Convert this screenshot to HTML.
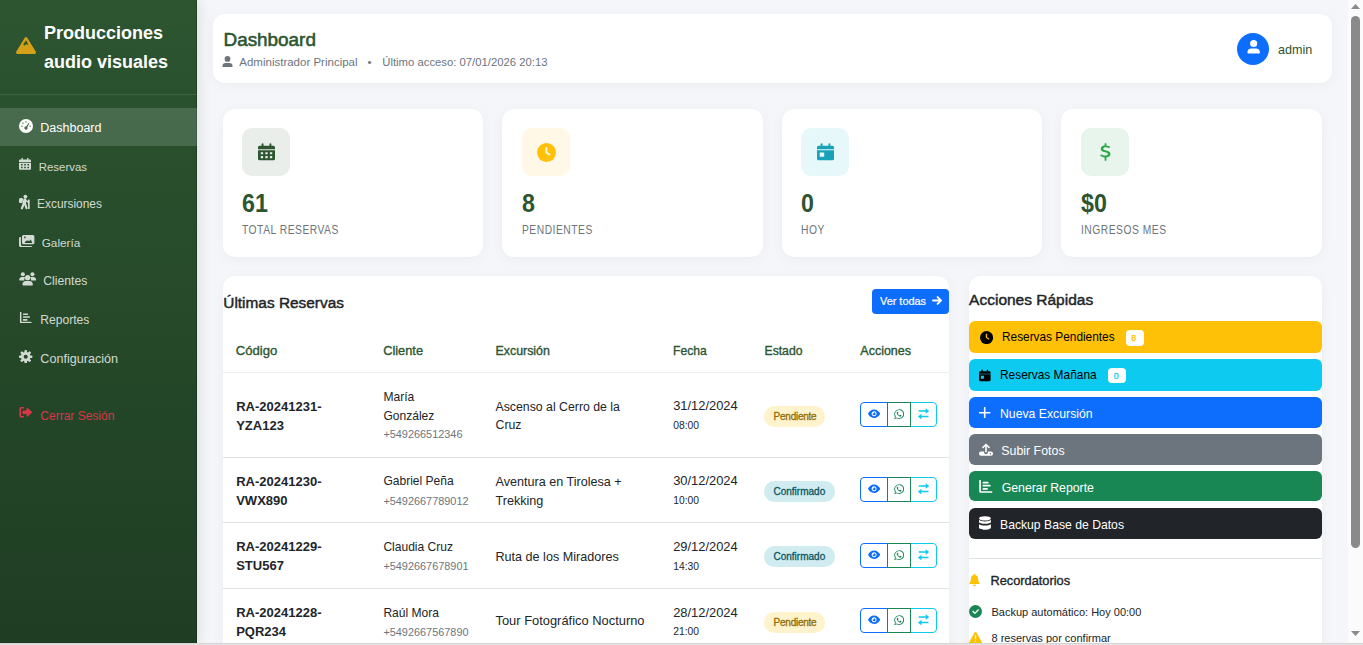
<!DOCTYPE html><html><head><meta charset="utf-8"><title>Dashboard</title><style>
html,body{margin:0;padding:0;width:1363px;height:645px;overflow:hidden;background:#f4f6f9;font-family:"Liberation Sans",sans-serif;}
.t{position:absolute;white-space:nowrap;line-height:1;}
svg{display:block;}
.card{position:absolute;background:#fff;border-radius:12px;box-shadow:0 2px 12px rgba(0,0,0,0.045);}

</style></head><body>
<div style="position:absolute;left:0px;top:0px;width:197px;height:645px;background:linear-gradient(180deg,#2c5530 0%,#1f3d23 100%);box-shadow:3px 0 12px rgba(0,0,0,0.09);"></div>
<div style="position:absolute;left:196px;top:0px;width:1px;height:645px;background:rgba(0,0,0,0.2);"></div>
<svg style="position:absolute;left:16px;top:37px;" width="20" height="17" viewBox="0 0 20 17" fill="#d4a017"><path d="M10 0c.5 0 .9.3 1.2.7l8.5 13.9c.6 1-.1 2.4-1.2 2.4H1.5C.4 17-.3 15.6.3 14.6L8.8.7C9.1.3 9.5 0 10 0z"/><path d="M10 3.2L7.2 7.8l1.3.9 1.5-1.8 1.2 1.2 1-.8-.6-1z" fill="#2c5530"/></svg>
<div class="t" style="left:44.00px;top:24.00px;font-size:18px;color:#fff;font-weight:bold;">Producciones</div>
<div class="t" style="left:44.00px;top:53.00px;font-size:18px;color:#fff;font-weight:bold;">audio visuales</div>
<div style="position:absolute;left:0px;top:94px;width:197px;height:1px;background:rgba(255,255,255,0.1);"></div>
<div style="position:absolute;left:0px;top:108px;width:197px;height:38px;background:rgba(255,255,255,0.15);"></div>
<svg style="position:absolute;left:19px;top:119px;" width="14" height="14" viewBox="0 0 16 16" fill="#fff"><circle cx="8" cy="8" r="8"/><g fill="#496a4d"><circle cx="8" cy="3.3" r=".8"/><circle cx="4.5" cy="4.9" r=".8"/><circle cx="3.3" cy="8.2" r=".8"/><circle cx="12.7" cy="8.2" r=".8"/><circle cx="8" cy="10.3" r="1.9"/><path d="M10.9 4.6l.9.5-3 5.6-1.5-.8z"/></g></svg>
<svg style="position:absolute;left:19px;top:157px;" width="12" height="13.6" viewBox="0 0 16 16" fill="#fff" opacity="0.8"><path d="M3.4 .8a.9.9 0 0 1 1.8 0V3H3.4zM10.8 .8a.9.9 0 0 1 1.8 0V3h-1.8z"/><path d="M0 3.8a1.5 1.5 0 0 1 1.5-1.5h13A1.5 1.5 0 0 1 16 3.8V5.6H0z"/><path fill-rule="evenodd" d="M0 6.5h16v8a1.5 1.5 0 0 1-1.5 1.5h-13A1.5 1.5 0 0 1 0 14.5z M2.6 8.4v2h2.2v-2z M6.9 8.4v2h2.2v-2z M11.2 8.4v2h2.2v-2z M2.6 12v2h2.2v-2z M6.9 12v2h2.2v-2z M11.2 12v2h2.2v-2z"/></svg>
<svg style="position:absolute;left:17px;top:193px;" width="16" height="18" viewBox="0 0 16 18" fill="#fff" opacity="0.8"><circle cx="8.4" cy="3.6" r="1.9"/><rect x="2" y="5" width="3.9" height="5" rx="1.3" transform="rotate(8 4 7.5)"/><g stroke="#fff" stroke-linecap="round" fill="none"><path d="M7.9 6.8L7.2 10.6" stroke-width="3.2"/><path d="M6.6 11L4.9 15.3" stroke-width="2.2"/><path d="M8.2 11L9.5 15.3" stroke-width="2.2"/><path d="M8.8 7.6L11.2 9" stroke-width="1.6"/></g><rect x="11" y="6.4" width="1.7" height="9.6" rx=".6"/></svg>
<svg style="position:absolute;left:19px;top:235px;" width="16" height="12" viewBox="0 0 16 12" fill="#fff" opacity="0.8"><path fill-rule="evenodd" d="M4.5 0h9.4a1.5 1.5 0 0 1 1.5 1.5v6.3a1.5 1.5 0 0 1-1.5 1.5H4.5A1.5 1.5 0 0 1 3 7.8V1.5A1.5 1.5 0 0 1 4.5 0z M5.6 7.9c.4-1.4 1.6-2.4 3.1-2.4.6 0 1.2.2 1.7.5l1.3-1.6 1.7 3.5z M5.9 1.6a.8.8 0 1 0 .001 0z"/><path d="M0 3.5A1.4 1.4 0 0 1 1.4 2.1H1.9v7.5c0 .8.6 1.4 1.4 1.4h9.8v.1c0 .5-.4.9-.9.9H1.4A1.4 1.4 0 0 1 0 10.6z"/></svg>
<svg style="position:absolute;left:18.7px;top:272.2px;" width="17.3" height="13.9" viewBox="0 0 18 14" fill="#fff" opacity="0.8"><circle cx="4" cy="2.2" r="2.1"/><circle cx="14" cy="2.2" r="2.1"/><path d="M0.2 7.9c0-1.6 1.3-2.9 2.9-2.9h1.8c.6 0 1.1.2 1.5.4a3.9 3.9 0 0 0-.9 3.1H.8a.6.6 0 0 1-.6-.6z"/><path d="M17.8 7.9c0-1.6-1.3-2.9-2.9-2.9h-1.8c-.6 0-1.1.2-1.5.4a3.9 3.9 0 0 1 .9 3.1h4.7a.6.6 0 0 0 .6-.6z"/><circle cx="9" cy="5.7" r="2.7"/><path d="M7 9.2h4c1.9 0 3.4 1.5 3.4 3.4v.5a.8.8 0 0 1-.8.8H4.4a.8.8 0 0 1-.8-.8v-.5c0-1.9 1.5-3.4 3.4-3.4z"/></svg>
<svg style="position:absolute;left:19.2px;top:311.5px;" width="13.4" height="11.5" viewBox="0 0 14 14" fill="#fff" opacity="0.8"><path d="M0 .6a.9.9 0 0 1 1.8 0V12h11.5a.9.9 0 0 1 0 1.8H1.2A1.2 1.2 0 0 1 0 12.6z"/><rect x="3.6" y="1.8" width="6.4" height="1.9" rx=".6"/><rect x="3.6" y="5.2" width="8.6" height="1.9" rx=".6"/><rect x="3.6" y="8.6" width="5.6" height="1.9" rx=".6"/></svg>
<svg style="position:absolute;left:19.2px;top:349.7px;" width="13.4" height="13.4" viewBox="0 0 16 16" fill="#fff" opacity="0.8"><path fill-rule="evenodd" d="M8 2.3a5.7 5.7 0 1 1-.001 0z M8 5.6a2.4 2.4 0 1 0 .001 0z"/><rect x="6.5" y="0" width="3" height="4" rx=".8" transform="rotate(0 8 8)"/><rect x="6.5" y="0" width="3" height="4" rx=".8" transform="rotate(45 8 8)"/><rect x="6.5" y="0" width="3" height="4" rx=".8" transform="rotate(90 8 8)"/><rect x="6.5" y="0" width="3" height="4" rx=".8" transform="rotate(135 8 8)"/><rect x="6.5" y="0" width="3" height="4" rx=".8" transform="rotate(180 8 8)"/><rect x="6.5" y="0" width="3" height="4" rx=".8" transform="rotate(225 8 8)"/><rect x="6.5" y="0" width="3" height="4" rx=".8" transform="rotate(270 8 8)"/><rect x="6.5" y="0" width="3" height="4" rx=".8" transform="rotate(315 8 8)"/></svg>
<svg style="position:absolute;left:19.2px;top:406.4px;" width="13.4" height="12.5" viewBox="0 0 14 14" fill="#dc3545"><path d="M5 1H2.2A2.2 2.2 0 0 0 0 3.2v7.6A2.2 2.2 0 0 0 2.2 13H5v-1.8H2.4a.6.6 0 0 1-.6-.6V3.4c0-.3.3-.6.6-.6H5z"/><path d="M9.2 2.2l4.6 4.2a.8.8 0 0 1 0 1.2l-4.6 4.2a.7.7 0 0 1-1.2-.5V9H4.5a1 1 0 0 1-1-1V6a1 1 0 0 1 1-1H8V2.7a.7.7 0 0 1 1.2-.5z"/></svg>
<div class="t" style="left:40.30px;top:122.00px;font-size:12.5px;color:#fff;font-weight:normal;">Dashboard</div>
<div class="t" style="left:38.80px;top:162.00px;font-size:11.4px;color:rgba(255,255,255,0.8);font-weight:normal;">Reservas</div>
<div class="t" style="left:37.10px;top:199.00px;font-size:11.9px;color:rgba(255,255,255,0.8);font-weight:normal;">Excursiones</div>
<div class="t" style="left:41.70px;top:238.00px;font-size:11.8px;color:rgba(255,255,255,0.8);font-weight:normal;">Galería</div>
<div class="t" style="left:43.30px;top:275.00px;font-size:12.2px;color:rgba(255,255,255,0.8);font-weight:normal;">Clientes</div>
<div class="t" style="left:40.30px;top:314.00px;font-size:12.1px;color:rgba(255,255,255,0.8);font-weight:normal;">Reportes</div>
<div class="t" style="left:40.30px;top:353.00px;font-size:12.6px;color:rgba(255,255,255,0.8);font-weight:normal;">Configuración</div>
<div class="t" style="left:40.30px;top:410.00px;font-size:12.0px;color:#dc3545;font-weight:normal;">Cerrar Sesión</div>
<div class="card" style="left:213px;top:14px;width:1119px;height:69px;"></div>
<div class="t" style="left:223.50px;top:31.00px;font-size:18.9px;color:#2c5530;font-weight:normal;-webkit-text-stroke:0.55px currentColor;">Dashboard</div>
<svg style="position:absolute;left:222px;top:55.8px;" width="11" height="11.6" viewBox="0 0 14 16" fill="#6c757d"><circle cx="7" cy="4" r="4"/><path d="M4.6 9.5h4.8A4.6 4.6 0 0 1 14 14.1v.4a.8.8 0 0 1-.8.8H.8a.8.8 0 0 1-.8-.8v-.4A4.6 4.6 0 0 1 4.6 9.5z"/></svg>
<div class="t" style="left:239.30px;top:57.00px;font-size:11.5px;color:#6c757d;font-weight:normal;">Administrador Principal</div>
<div class="t" style="left:367.50px;top:57.00px;font-size:11.5px;color:#6c757d;font-weight:normal;">•</div>
<div class="t" style="left:382.30px;top:57.00px;font-size:11.3px;color:#6c757d;font-weight:normal;">Último acceso: 07/01/2026 20:13</div>
<div style="position:absolute;left:1237px;top:33px;width:32px;height:32px;background:#0d6efd;border-radius:50%;"></div>
<svg style="position:absolute;left:1247.2px;top:40px;" width="13.3" height="14.2" viewBox="0 0 14 16" fill="#fff"><circle cx="7" cy="4" r="4"/><path d="M4.6 9.5h4.8A4.6 4.6 0 0 1 14 14.1v.4a.8.8 0 0 1-.8.8H.8a.8.8 0 0 1-.8-.8v-.4A4.6 4.6 0 0 1 4.6 9.5z"/></svg>
<div class="t" style="left:1278.00px;top:44.00px;font-size:12.6px;color:#2c5530;font-weight:normal;">admin</div>
<div class="card" style="left:223px;top:109px;width:260.35px;height:148px;"></div>
<div style="position:absolute;left:242.2px;top:128px;width:48px;height:48px;background:#e9eeea;border-radius:10px;"></div>
<div class="t" style="left:242.20px;top:191.00px;font-size:25.8px;color:#2c5530;font-weight:bold;transform:scaleX(0.9);transform-origin:0 0;">61</div>
<div class="t" style="left:242.20px;top:224.00px;font-size:12.1px;color:#6c757d;font-weight:normal;letter-spacing:0.6px;transform:scaleX(0.85);transform-origin:0 0;">TOTAL RESERVAS</div>
<div class="card" style="left:502.35px;top:109px;width:260.35px;height:148px;"></div>
<div style="position:absolute;left:521.5500000000001px;top:128px;width:48px;height:48px;background:#fff8e6;border-radius:10px;"></div>
<div class="t" style="left:521.55px;top:191.00px;font-size:25.8px;color:#2c5530;font-weight:bold;transform:scaleX(0.9);transform-origin:0 0;">8</div>
<div class="t" style="left:521.55px;top:224.00px;font-size:12.1px;color:#6c757d;font-weight:normal;letter-spacing:0.6px;transform:scaleX(0.85);transform-origin:0 0;">PENDIENTES</div>
<div class="card" style="left:781.9px;top:109px;width:260.35px;height:148px;"></div>
<div style="position:absolute;left:801.1px;top:128px;width:48px;height:48px;background:#e7f8fb;border-radius:10px;"></div>
<div class="t" style="left:801.10px;top:191.00px;font-size:25.8px;color:#2c5530;font-weight:bold;transform:scaleX(0.9);transform-origin:0 0;">0</div>
<div class="t" style="left:801.10px;top:224.00px;font-size:12.1px;color:#6c757d;font-weight:normal;letter-spacing:0.6px;transform:scaleX(0.85);transform-origin:0 0;">HOY</div>
<div class="card" style="left:1061.45px;top:109px;width:260.35px;height:148px;"></div>
<div style="position:absolute;left:1080.65px;top:128px;width:48px;height:48px;background:#e8f5ec;border-radius:10px;"></div>
<div class="t" style="left:1080.65px;top:191.00px;font-size:25.8px;color:#2c5530;font-weight:bold;transform:scaleX(0.9);transform-origin:0 0;">$0</div>
<div class="t" style="left:1080.65px;top:224.00px;font-size:12.1px;color:#6c757d;font-weight:normal;letter-spacing:0.6px;transform:scaleX(0.85);transform-origin:0 0;">INGRESOS MES</div>
<svg style="position:absolute;left:257.5px;top:141.8px;" width="17" height="19.6" viewBox="0 0 16 16" fill="#2c5530"><path d="M3.4 .8a.9.9 0 0 1 1.8 0V3H3.4zM10.8 .8a.9.9 0 0 1 1.8 0V3h-1.8z"/><path d="M0 3.8a1.5 1.5 0 0 1 1.5-1.5h13A1.5 1.5 0 0 1 16 3.8V5.6H0z"/><path fill-rule="evenodd" d="M0 6.5h16v8a1.5 1.5 0 0 1-1.5 1.5h-13A1.5 1.5 0 0 1 0 14.5z M2.6 8.4v2h2.2v-2z M6.9 8.4v2h2.2v-2z M11.2 8.4v2h2.2v-2z M2.6 12v2h2.2v-2z M6.9 12v2h2.2v-2z M11.2 12v2h2.2v-2z"/></svg>
<svg style="position:absolute;left:536.5px;top:142.5px;" width="19" height="19" viewBox="0 0 16 16" fill="#ffc107"><circle cx="8" cy="8" r="8"/><path d="M7.1 3.5h1.6v4.1l2.8 1.9-.9 1.3-3.5-2.4z" fill="#fff8e6"/></svg>
<svg style="position:absolute;left:817px;top:141.8px;" width="17" height="19.6" viewBox="0 0 16 16" fill="#17a2b8"><path d="M3.4 .8a.9.9 0 0 1 1.8 0V3H3.4zM10.8 .8a.9.9 0 0 1 1.8 0V3h-1.8z"/><path d="M0 3.8a1.5 1.5 0 0 1 1.5-1.5h13A1.5 1.5 0 0 1 16 3.8V5.6H0z"/><path fill-rule="evenodd" d="M0 6.5h16v8a1.5 1.5 0 0 1-1.5 1.5h-13A1.5 1.5 0 0 1 0 14.5z M2.6 8.6v4h4.2v-4z"/></svg>
<svg style="position:absolute;left:1099.5px;top:143px;" width="11" height="18" viewBox="0 0 10 16" fill="#28a745"><path d="M4.2 0h1.6v2c1.3.1 2.5.5 3.4 1.1l-.8 1.5c-.9-.5-2-.9-3.2-.9-1.4 0-2.2.5-2.2 1.3 0 .9.9 1.2 2.6 1.6 2.2.5 3.9 1.2 3.9 3.3 0 1.7-1.4 2.8-3.7 3V16H4.2v-3.1c-1.6-.1-3-.6-4.1-1.4l.8-1.5c1.1.7 2.5 1.2 3.9 1.2 1.5 0 2.4-.5 2.4-1.4 0-.9-.8-1.2-2.7-1.6C2.3 7.7.7 7 .7 5c0-1.6 1.3-2.8 3.5-3z"/></svg>
<div class="card" style="left:223px;top:276px;width:726px;height:400px;"></div>
<div class="t" style="left:223.30px;top:295.00px;font-size:15.4px;color:#212529;font-weight:normal;-webkit-text-stroke:0.45px currentColor;">Últimas Reservas</div>
<div style="position:absolute;left:872px;top:289px;width:77px;height:25px;background:#0d6efd;border-radius:4px;"></div>
<div class="t" style="left:880.00px;top:296.00px;font-size:10.9px;color:#fff;font-weight:normal;-webkit-text-stroke:0.2px currentColor;">Ver todas</div>
<svg style="position:absolute;left:931.8px;top:296.4px;" width="10.3" height="9" viewBox="0 0 10.3 9" fill="#fff"><g fill="none" stroke="#fff" stroke-width="1.9" stroke-linecap="round" stroke-linejoin="round"><path d="M1 4.5h8M5.6 1.1L9 4.5 5.6 7.9"/></g></svg>
<div class="t" style="left:235.80px;top:344.00px;font-size:13.1px;color:#2c5530;font-weight:normal;-webkit-text-stroke:0.35px currentColor;">Código</div>
<div class="t" style="left:383.20px;top:345.00px;font-size:12.8px;color:#2c5530;font-weight:normal;-webkit-text-stroke:0.35px currentColor;">Cliente</div>
<div class="t" style="left:495.50px;top:345.00px;font-size:12.4px;color:#2c5530;font-weight:normal;-webkit-text-stroke:0.35px currentColor;">Excursión</div>
<div class="t" style="left:673.10px;top:345.00px;font-size:12.1px;color:#2c5530;font-weight:normal;-webkit-text-stroke:0.35px currentColor;">Fecha</div>
<div class="t" style="left:764.50px;top:345.00px;font-size:12.2px;color:#2c5530;font-weight:normal;-webkit-text-stroke:0.35px currentColor;">Estado</div>
<div class="t" style="left:860.30px;top:345.00px;font-size:12.5px;color:#2c5530;font-weight:normal;-webkit-text-stroke:0.35px currentColor;">Acciones</div>
<div style="position:absolute;left:223px;top:372px;width:726px;height:1px;background:#eceef0;"></div>
<div style="position:absolute;left:223px;top:457px;width:726px;height:1px;background:#dee2e6;"></div>
<div style="position:absolute;left:223px;top:522px;width:726px;height:1px;background:#dee2e6;"></div>
<div style="position:absolute;left:223px;top:588px;width:726px;height:1px;background:#dee2e6;"></div>
<div class="t" style="left:236.20px;top:400.00px;font-size:13px;color:#212529;font-weight:bold;">RA-20241231-</div>
<div class="t" style="left:236.20px;top:419.00px;font-size:13px;color:#212529;font-weight:bold;">YZA123</div>
<div class="t" style="left:383.40px;top:391.00px;font-size:12.06px;color:#212529;font-weight:normal;">María</div>
<div class="t" style="left:383.40px;top:410.00px;font-size:12.06px;color:#212529;font-weight:normal;">González</div>
<div class="t" style="left:383.40px;top:429.00px;font-size:10.9px;color:#6c757d;font-weight:normal;">+549266512346</div>
<div class="t" style="left:495.50px;top:401.00px;font-size:12.3px;color:#212529;font-weight:normal;">Ascenso al Cerro de la</div>
<div class="t" style="left:495.50px;top:419.00px;font-size:12.3px;color:#212529;font-weight:normal;">Cruz</div>
<div class="t" style="left:673.20px;top:400.00px;font-size:12.9px;color:#212529;font-weight:normal;">31/12/2024</div>
<div class="t" style="left:673.20px;top:421.00px;font-size:10.3px;color:#212529;font-weight:normal;">08:00</div>
<div style="position:absolute;left:764.3px;top:406.2px;width:61.2px;height:20.5px;background:#fff3cd;border-radius:10.25px;"></div>
<div class="t" style="left:773.60px;top:412.00px;font-size:10px;color:#8f6c05;font-weight:normal;-webkit-text-stroke:0.3px currentColor;letter-spacing:-0.25px;">Pendiente</div>
<div style="position:absolute;left:860px;top:402px;width:28px;height:25px;box-sizing:border-box;border:1px solid #0d6efd;border-radius:4px 0 0 4px;"></div>
<div style="position:absolute;left:910px;top:402px;width:27px;height:25px;box-sizing:border-box;border:1px solid #0dcaf0;border-radius:0 4px 4px 0;"></div>
<div style="position:absolute;left:887px;top:402px;width:24px;height:25px;box-sizing:border-box;border:1px solid #198754;"></div>
<svg style="position:absolute;left:867.8px;top:408.9px;" width="12.2" height="9.6" viewBox="0 0 16 11" fill="#0d6efd"><path fill-rule="evenodd" d="M8 0c3.6 0 6.5 2.7 7.8 5a1 1 0 0 1 0 .9C14.5 8.3 11.6 11 8 11S1.5 8.3.2 5.9a1 1 0 0 1 0-.9C1.5 2.7 4.4 0 8 0z M8 2.3a3.2 3.2 0 1 0 .001 0z"/><path d="M8 3.6a1.9 1.9 0 1 1-1.8 1.4 1.2 1.2 0 0 0 1.6-1.3z"/></svg>
<svg style="position:absolute;left:893.9px;top:409.3px;" width="10.4" height="10.4" viewBox="0 0 16 16" fill="#198754"><path fill-rule="evenodd" d="M8 0.2a7.6 7.6 0 0 1 0 15.2c-1.3 0-2.6-.3-3.7-1L.3 15.6l1.2-3.8A7.6 7.6 0 0 1 8 .2z M8 1.5a6.3 6.3 0 0 0-5.3 9.7l.2.3-.7 2.3 2.4-.6.3.2A6.3 6.3 0 1 0 8 1.5z"/><path d="M5.5 4.3c.2 0 .4 0 .5.3l.7 1.6c.1.2 0 .4-.1.5l-.5.6c-.1.1-.1.3 0 .4.5.9 1.2 1.6 2.1 2.1.1.1.3.1.4 0l.6-.7c.1-.1.3-.2.5-.1l1.5.7c.2.1.3.3.3.5 0 .9-.7 1.6-1.6 1.6C7.7 11.8 4.2 8.4 4.2 5.9c0-.9.5-1.6 1.3-1.6z"/></svg>
<svg style="position:absolute;left:918.2px;top:407.9px;" width="11.2" height="11.5" viewBox="0 0 16 16" fill="#0dcaf0"><path d="M11 0l4.6 3.6a.6.6 0 0 1 0 .9L11 8V5.2H1V2.9h10z"/><path d="M5 8v2.8h10v2.3H5V16L.4 12.5a.6.6 0 0 1 0-.9z"/></svg>
<div class="t" style="left:236.20px;top:475.00px;font-size:13px;color:#212529;font-weight:bold;">RA-20241230-</div>
<div class="t" style="left:236.20px;top:494.00px;font-size:13px;color:#212529;font-weight:bold;">VWX890</div>
<div class="t" style="left:383.40px;top:475.00px;font-size:12.06px;color:#212529;font-weight:normal;">Gabriel Peña</div>
<div class="t" style="left:383.40px;top:496.00px;font-size:10.9px;color:#6c757d;font-weight:normal;">+5492667789012</div>
<div class="t" style="left:495.50px;top:476.00px;font-size:12.6px;color:#212529;font-weight:normal;">Aventura en Tirolesa +</div>
<div class="t" style="left:495.50px;top:495.00px;font-size:12.6px;color:#212529;font-weight:normal;">Trekking</div>
<div class="t" style="left:673.20px;top:475.00px;font-size:12.9px;color:#212529;font-weight:normal;">30/12/2024</div>
<div class="t" style="left:673.20px;top:496.00px;font-size:10.3px;color:#212529;font-weight:normal;">10:00</div>
<div style="position:absolute;left:764.2px;top:481px;width:70.8px;height:20.5px;background:#d1ecf1;border-radius:10.25px;"></div>
<div class="t" style="left:773.50px;top:487.00px;font-size:10px;color:#0c5460;font-weight:normal;-webkit-text-stroke:0.3px currentColor;letter-spacing:0px;">Confirmado</div>
<div style="position:absolute;left:860px;top:477px;width:28px;height:25px;box-sizing:border-box;border:1px solid #0d6efd;border-radius:4px 0 0 4px;"></div>
<div style="position:absolute;left:910px;top:477px;width:27px;height:25px;box-sizing:border-box;border:1px solid #0dcaf0;border-radius:0 4px 4px 0;"></div>
<div style="position:absolute;left:887px;top:477px;width:24px;height:25px;box-sizing:border-box;border:1px solid #198754;"></div>
<svg style="position:absolute;left:867.8px;top:483.9px;" width="12.2" height="9.6" viewBox="0 0 16 11" fill="#0d6efd"><path fill-rule="evenodd" d="M8 0c3.6 0 6.5 2.7 7.8 5a1 1 0 0 1 0 .9C14.5 8.3 11.6 11 8 11S1.5 8.3.2 5.9a1 1 0 0 1 0-.9C1.5 2.7 4.4 0 8 0z M8 2.3a3.2 3.2 0 1 0 .001 0z"/><path d="M8 3.6a1.9 1.9 0 1 1-1.8 1.4 1.2 1.2 0 0 0 1.6-1.3z"/></svg>
<svg style="position:absolute;left:893.9px;top:484.3px;" width="10.4" height="10.4" viewBox="0 0 16 16" fill="#198754"><path fill-rule="evenodd" d="M8 0.2a7.6 7.6 0 0 1 0 15.2c-1.3 0-2.6-.3-3.7-1L.3 15.6l1.2-3.8A7.6 7.6 0 0 1 8 .2z M8 1.5a6.3 6.3 0 0 0-5.3 9.7l.2.3-.7 2.3 2.4-.6.3.2A6.3 6.3 0 1 0 8 1.5z"/><path d="M5.5 4.3c.2 0 .4 0 .5.3l.7 1.6c.1.2 0 .4-.1.5l-.5.6c-.1.1-.1.3 0 .4.5.9 1.2 1.6 2.1 2.1.1.1.3.1.4 0l.6-.7c.1-.1.3-.2.5-.1l1.5.7c.2.1.3.3.3.5 0 .9-.7 1.6-1.6 1.6C7.7 11.8 4.2 8.4 4.2 5.9c0-.9.5-1.6 1.3-1.6z"/></svg>
<svg style="position:absolute;left:918.2px;top:482.9px;" width="11.2" height="11.5" viewBox="0 0 16 16" fill="#0dcaf0"><path d="M11 0l4.6 3.6a.6.6 0 0 1 0 .9L11 8V5.2H1V2.9h10z"/><path d="M5 8v2.8h10v2.3H5V16L.4 12.5a.6.6 0 0 1 0-.9z"/></svg>
<div class="t" style="left:236.20px;top:540.00px;font-size:13px;color:#212529;font-weight:bold;">RA-20241229-</div>
<div class="t" style="left:236.20px;top:559.00px;font-size:13px;color:#212529;font-weight:bold;">STU567</div>
<div class="t" style="left:383.40px;top:541.00px;font-size:12.06px;color:#212529;font-weight:normal;">Claudia Cruz</div>
<div class="t" style="left:383.40px;top:561.00px;font-size:10.9px;color:#6c757d;font-weight:normal;">+5492667678901</div>
<div class="t" style="left:495.50px;top:551.00px;font-size:12.6px;color:#212529;font-weight:normal;">Ruta de los Miradores</div>
<div class="t" style="left:673.20px;top:541.00px;font-size:12.9px;color:#212529;font-weight:normal;">29/12/2024</div>
<div class="t" style="left:673.20px;top:562.00px;font-size:10.3px;color:#212529;font-weight:normal;">14:30</div>
<div style="position:absolute;left:764.2px;top:546.2px;width:70.8px;height:20.5px;background:#d1ecf1;border-radius:10.25px;"></div>
<div class="t" style="left:773.50px;top:552.00px;font-size:10px;color:#0c5460;font-weight:normal;-webkit-text-stroke:0.3px currentColor;letter-spacing:0px;">Confirmado</div>
<div style="position:absolute;left:860px;top:543px;width:28px;height:25px;box-sizing:border-box;border:1px solid #0d6efd;border-radius:4px 0 0 4px;"></div>
<div style="position:absolute;left:910px;top:543px;width:27px;height:25px;box-sizing:border-box;border:1px solid #0dcaf0;border-radius:0 4px 4px 0;"></div>
<div style="position:absolute;left:887px;top:543px;width:24px;height:25px;box-sizing:border-box;border:1px solid #198754;"></div>
<svg style="position:absolute;left:867.8px;top:549.9px;" width="12.2" height="9.6" viewBox="0 0 16 11" fill="#0d6efd"><path fill-rule="evenodd" d="M8 0c3.6 0 6.5 2.7 7.8 5a1 1 0 0 1 0 .9C14.5 8.3 11.6 11 8 11S1.5 8.3.2 5.9a1 1 0 0 1 0-.9C1.5 2.7 4.4 0 8 0z M8 2.3a3.2 3.2 0 1 0 .001 0z"/><path d="M8 3.6a1.9 1.9 0 1 1-1.8 1.4 1.2 1.2 0 0 0 1.6-1.3z"/></svg>
<svg style="position:absolute;left:893.9px;top:550.3px;" width="10.4" height="10.4" viewBox="0 0 16 16" fill="#198754"><path fill-rule="evenodd" d="M8 0.2a7.6 7.6 0 0 1 0 15.2c-1.3 0-2.6-.3-3.7-1L.3 15.6l1.2-3.8A7.6 7.6 0 0 1 8 .2z M8 1.5a6.3 6.3 0 0 0-5.3 9.7l.2.3-.7 2.3 2.4-.6.3.2A6.3 6.3 0 1 0 8 1.5z"/><path d="M5.5 4.3c.2 0 .4 0 .5.3l.7 1.6c.1.2 0 .4-.1.5l-.5.6c-.1.1-.1.3 0 .4.5.9 1.2 1.6 2.1 2.1.1.1.3.1.4 0l.6-.7c.1-.1.3-.2.5-.1l1.5.7c.2.1.3.3.3.5 0 .9-.7 1.6-1.6 1.6C7.7 11.8 4.2 8.4 4.2 5.9c0-.9.5-1.6 1.3-1.6z"/></svg>
<svg style="position:absolute;left:918.2px;top:548.9px;" width="11.2" height="11.5" viewBox="0 0 16 16" fill="#0dcaf0"><path d="M11 0l4.6 3.6a.6.6 0 0 1 0 .9L11 8V5.2H1V2.9h10z"/><path d="M5 8v2.8h10v2.3H5V16L.4 12.5a.6.6 0 0 1 0-.9z"/></svg>
<div class="t" style="left:236.20px;top:606.00px;font-size:13px;color:#212529;font-weight:bold;">RA-20241228-</div>
<div class="t" style="left:236.20px;top:625.00px;font-size:13px;color:#212529;font-weight:bold;">PQR234</div>
<div class="t" style="left:383.40px;top:607.00px;font-size:12.06px;color:#212529;font-weight:normal;">Raúl Mora</div>
<div class="t" style="left:383.40px;top:627.00px;font-size:10.9px;color:#6c757d;font-weight:normal;">+5492667567890</div>
<div class="t" style="left:495.50px;top:615.00px;font-size:12.9px;color:#212529;font-weight:normal;">Tour Fotográfico Nocturno</div>
<div class="t" style="left:673.20px;top:607.00px;font-size:12.9px;color:#212529;font-weight:normal;">28/12/2024</div>
<div class="t" style="left:673.20px;top:627.00px;font-size:10.3px;color:#212529;font-weight:normal;">21:00</div>
<div style="position:absolute;left:764.3px;top:612px;width:61.2px;height:20.5px;background:#fff3cd;border-radius:10.25px;"></div>
<div class="t" style="left:773.60px;top:618.00px;font-size:10px;color:#8f6c05;font-weight:normal;-webkit-text-stroke:0.3px currentColor;letter-spacing:-0.25px;">Pendiente</div>
<div style="position:absolute;left:860px;top:608px;width:28px;height:25px;box-sizing:border-box;border:1px solid #0d6efd;border-radius:4px 0 0 4px;"></div>
<div style="position:absolute;left:910px;top:608px;width:27px;height:25px;box-sizing:border-box;border:1px solid #0dcaf0;border-radius:0 4px 4px 0;"></div>
<div style="position:absolute;left:887px;top:608px;width:24px;height:25px;box-sizing:border-box;border:1px solid #198754;"></div>
<svg style="position:absolute;left:867.8px;top:614.9px;" width="12.2" height="9.6" viewBox="0 0 16 11" fill="#0d6efd"><path fill-rule="evenodd" d="M8 0c3.6 0 6.5 2.7 7.8 5a1 1 0 0 1 0 .9C14.5 8.3 11.6 11 8 11S1.5 8.3.2 5.9a1 1 0 0 1 0-.9C1.5 2.7 4.4 0 8 0z M8 2.3a3.2 3.2 0 1 0 .001 0z"/><path d="M8 3.6a1.9 1.9 0 1 1-1.8 1.4 1.2 1.2 0 0 0 1.6-1.3z"/></svg>
<svg style="position:absolute;left:893.9px;top:615.3px;" width="10.4" height="10.4" viewBox="0 0 16 16" fill="#198754"><path fill-rule="evenodd" d="M8 0.2a7.6 7.6 0 0 1 0 15.2c-1.3 0-2.6-.3-3.7-1L.3 15.6l1.2-3.8A7.6 7.6 0 0 1 8 .2z M8 1.5a6.3 6.3 0 0 0-5.3 9.7l.2.3-.7 2.3 2.4-.6.3.2A6.3 6.3 0 1 0 8 1.5z"/><path d="M5.5 4.3c.2 0 .4 0 .5.3l.7 1.6c.1.2 0 .4-.1.5l-.5.6c-.1.1-.1.3 0 .4.5.9 1.2 1.6 2.1 2.1.1.1.3.1.4 0l.6-.7c.1-.1.3-.2.5-.1l1.5.7c.2.1.3.3.3.5 0 .9-.7 1.6-1.6 1.6C7.7 11.8 4.2 8.4 4.2 5.9c0-.9.5-1.6 1.3-1.6z"/></svg>
<svg style="position:absolute;left:918.2px;top:613.9px;" width="11.2" height="11.5" viewBox="0 0 16 16" fill="#0dcaf0"><path d="M11 0l4.6 3.6a.6.6 0 0 1 0 .9L11 8V5.2H1V2.9h10z"/><path d="M5 8v2.8h10v2.3H5V16L.4 12.5a.6.6 0 0 1 0-.9z"/></svg>
<div class="card" style="left:969px;top:276px;width:353px;height:400px;"></div>
<div class="t" style="left:969.10px;top:292.00px;font-size:15.5px;color:#212529;font-weight:normal;-webkit-text-stroke:0.45px currentColor;">Acciones Rápidas</div>
<div style="position:absolute;left:969px;top:321px;width:353px;height:31.5px;background:#ffc107;border-radius:6px;"></div>
<div class="t" style="left:1002.00px;top:332.00px;font-size:11.85px;color:#000;font-weight:normal;">Reservas Pendientes</div>
<div style="position:absolute;left:969px;top:359px;width:353px;height:31.6px;background:#0dcaf0;border-radius:6px;"></div>
<div class="t" style="left:1000.00px;top:370.00px;font-size:11.92px;color:#000;font-weight:normal;">Reservas Mañana</div>
<div style="position:absolute;left:969px;top:397px;width:353px;height:30.5px;background:#0d6efd;border-radius:6px;"></div>
<div class="t" style="left:1000.00px;top:408.00px;font-size:12.26px;color:#fff;font-weight:normal;">Nueva Excursión</div>
<div style="position:absolute;left:969px;top:434px;width:353px;height:30.5px;background:#6c757d;border-radius:6px;"></div>
<div class="t" style="left:1001.30px;top:445.00px;font-size:12.38px;color:#fff;font-weight:normal;">Subir Fotos</div>
<div style="position:absolute;left:969px;top:471px;width:353px;height:30.2px;background:#198754;border-radius:6px;"></div>
<div class="t" style="left:1001.70px;top:482.00px;font-size:12.3px;color:#fff;font-weight:normal;">Generar Reporte</div>
<div style="position:absolute;left:969px;top:508px;width:353px;height:30.5px;background:#212529;border-radius:6px;"></div>
<div class="t" style="left:1000.00px;top:519.00px;font-size:12.19px;color:#fff;font-weight:normal;">Backup Base de Datos</div>
<svg style="position:absolute;left:979.5px;top:330.5px;" width="13.1" height="13.1" viewBox="0 0 16 16" fill="#000"><circle cx="8" cy="8" r="8"/><path d="M7.1 3.5h1.6v4.1l2.8 1.9-.9 1.3-3.5-2.4z" fill="#ffc107"/></svg>
<svg style="position:absolute;left:979.3px;top:368.8px;" width="11.6" height="12.8" viewBox="0 0 16 16" fill="#000"><path d="M3.4 .8a.9.9 0 0 1 1.8 0V3H3.4zM10.8 .8a.9.9 0 0 1 1.8 0V3h-1.8z"/><path d="M0 3.8a1.5 1.5 0 0 1 1.5-1.5h13A1.5 1.5 0 0 1 16 3.8V5.6H0z"/><path fill-rule="evenodd" d="M0 6.5h16v8a1.5 1.5 0 0 1-1.5 1.5h-13A1.5 1.5 0 0 1 0 14.5z M2.6 8.6v4h4.2v-4z"/></svg>
<svg style="position:absolute;left:979.3px;top:406.55px;" width="11.4" height="11.4" viewBox="0 0 16 16" fill="#fff"><path d="M6.9 .9a1.1 1.1 0 0 1 2.2 0v6h6a1.1 1.1 0 0 1 0 2.2h-6v6a1.1 1.1 0 0 1-2.2 0v-6h-6a1.1 1.1 0 0 1 0-2.2h6z"/></svg>
<svg style="position:absolute;left:979px;top:443.3px;" width="14" height="13.3" viewBox="0 0 16 14" fill="#fff"><path d="M8 0l4.6 4.4-1.2 1.2L8.9 3.1V10H7.1V3.1L4.6 5.6 3.4 4.4z"/><path fill-rule="evenodd" d="M2.3 9.2H5.8v.9a2.2 2.2 0 0 0 4.4 0v-.9h3.5A2.3 2.3 0 0 1 16 11.5v.2a2.3 2.3 0 0 1-2.3 2.3H2.3A2.3 2.3 0 0 1 0 11.7v-.2a2.3 2.3 0 0 1 2.3-2.3z M13 10.8a.8.8 0 1 0 .001 0z"/></svg>
<svg style="position:absolute;left:979.1px;top:479.6px;" width="13.5" height="13" viewBox="0 0 14 14" fill="#fff"><path d="M0 .6a.9.9 0 0 1 1.8 0V12h11.5a.9.9 0 0 1 0 1.8H1.2A1.2 1.2 0 0 1 0 12.6z"/><rect x="3.6" y="1.8" width="6.4" height="1.9" rx=".6"/><rect x="3.6" y="5.2" width="8.6" height="1.9" rx=".6"/><rect x="3.6" y="8.6" width="5.6" height="1.9" rx=".6"/></svg>
<svg style="position:absolute;left:979.1px;top:516.25px;" width="11.9" height="14" viewBox="0 0 14 16" fill="#fff"><ellipse cx="7" cy="2.6" rx="7" ry="2.6"/><path d="M0 4.6c1.4 1.1 4 1.6 7 1.6s5.6-.5 7-1.6V7.4c-1.4 1.1-4 1.6-7 1.6S1.4 8.5 0 7.4z"/><path d="M0 9.4c1.4 1.1 4 1.6 7 1.6s5.6-.5 7-1.6v3.9C14 14.8 10.9 16 7 16s-7-1.2-7-2.7z"/></svg>
<div style="position:absolute;left:1126px;top:330.2px;width:17.6px;height:15.4px;background:#fff;border-radius:4px;"></div>
<div class="t" style="left:1131.30px;top:334.00px;font-size:8.8px;color:#ffc107;font-weight:normal;-webkit-text-stroke:0.3px currentColor;">8</div>
<div style="position:absolute;left:1108px;top:368.4px;width:17.8px;height:15.1px;background:#fff;border-radius:4px;"></div>
<div class="t" style="left:1113.70px;top:372.00px;font-size:8.8px;color:#0dcaf0;font-weight:normal;-webkit-text-stroke:0.3px currentColor;">0</div>
<div style="position:absolute;left:969px;top:558px;width:353px;height:1px;background:#dee2e6;"></div>
<svg style="position:absolute;left:969.1px;top:574px;" width="11" height="12.6" viewBox="0 0 14 16" fill="#ffc107"><path d="M6.1 0h1.8v1.1A4.6 4.6 0 0 1 11.6 5.6v1.5c0 1.4.5 2.8 1.4 3.9l.5.5c.4.5.1 1.3-.6 1.3H1.1c-.7 0-1-.8-.6-1.3l.5-.5c.9-1.1 1.4-2.5 1.4-3.9V5.6A4.6 4.6 0 0 1 6.1 1.1z"/><path d="M5 13.6h4a2 2 0 0 1-4 0z"/></svg>
<div class="t" style="left:990.40px;top:575.00px;font-size:12.8px;color:#212529;font-weight:normal;-webkit-text-stroke:0.35px currentColor;">Recordatorios</div>
<svg style="position:absolute;left:968.8px;top:604.8px;" width="13" height="13" viewBox="0 0 16 16" fill="#198754"><circle cx="8" cy="8" r="8"/><path d="M11.3 5l1.1 1.1-5.2 5.2L3.9 8l1.1-1.1 2.2 2.2z" fill="#fff"/></svg>
<div class="t" style="left:991.50px;top:607.00px;font-size:11px;color:#212529;font-weight:normal;">Backup automático: Hoy 00:00</div>
<svg style="position:absolute;left:968.8px;top:631.8px;" width="13" height="11.7" viewBox="0 0 16 14.4" fill="#ffc107"><path d="M8 0c.5 0 .9.3 1.2.7l6.6 11.6c.5.9-.1 2.1-1.2 2.1H1.4c-1.1 0-1.7-1.2-1.2-2.1L6.8.7C7.1.3 7.5 0 8 0z"/><path d="M7.1 4h1.8l-.3 5H7.4z M8 10.2a1 1 0 1 1 0 2 1 1 0 0 1 0-2z" fill="#fff"/></svg>
<div class="t" style="left:991.50px;top:633.00px;font-size:11px;color:#212529;font-weight:normal;">8 reservas por confirmar</div>
<div style="position:absolute;left:1348px;top:0px;width:15px;height:645px;background:#fbfbfb;"></div>
<div style="position:absolute;left:1351px;top:16px;width:9px;height:532px;background:#8a8a8a;border-radius:5px;"></div>
<svg style="position:absolute;left:1351px;top:4px;" width="9" height="5" viewBox="0 0 9 5" fill="#8a8a8a"><path d="M4.5 0L9 5H0z"/></svg>
<svg style="position:absolute;left:1351px;top:631px;" width="9" height="5" viewBox="0 0 9 5" fill="#8a8a8a"><path d="M0 0h9L4.5 5z"/></svg>
<div style="position:absolute;left:0px;top:643px;width:1363px;height:1px;background:#d4d4d4;"></div>
<div style="position:absolute;left:0px;top:644px;width:1363px;height:1px;background:#e4e4e4;"></div>
</body></html>
